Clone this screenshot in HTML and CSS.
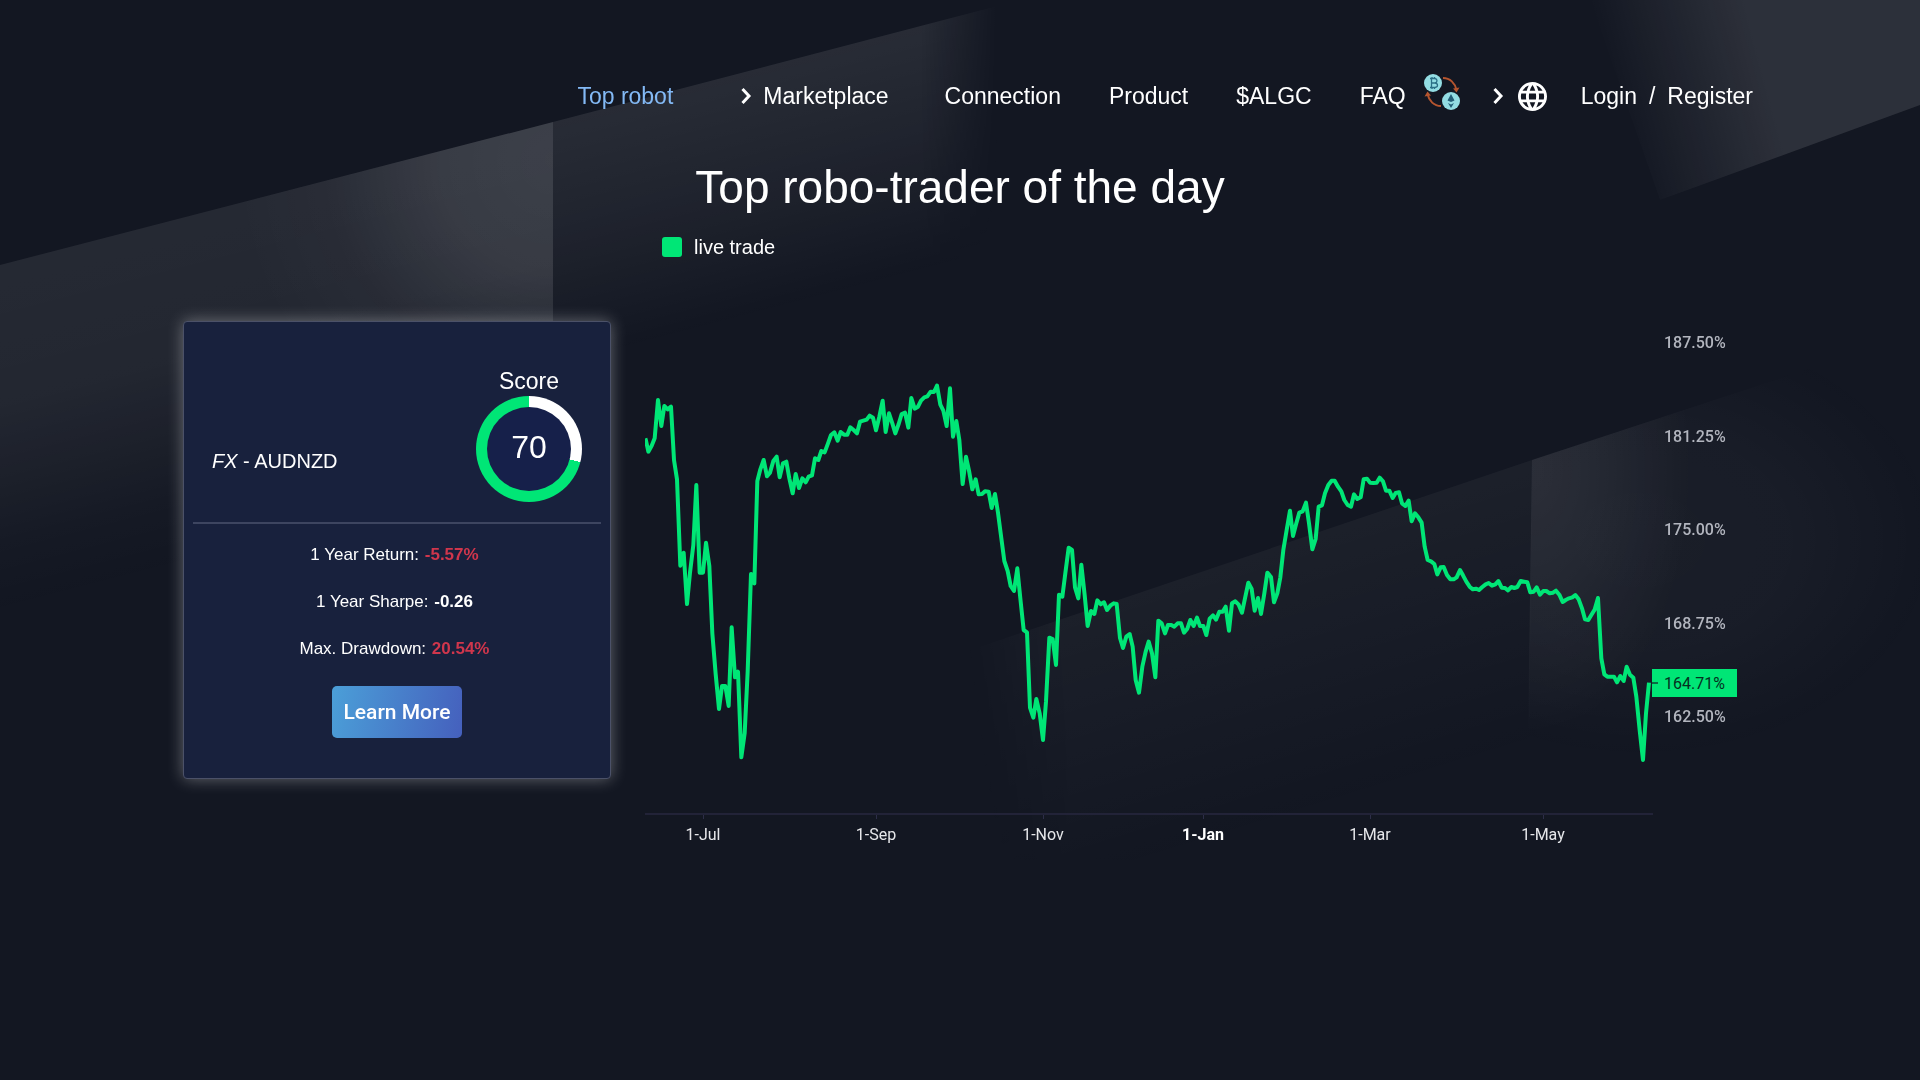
FILE: index.html
```html
<!DOCTYPE html>
<html lang="en">
<head>
    <meta charset="UTF-8">
    <meta name="viewport" content="width=device-width, initial-scale=1.0">
    <title>Top robo-trader of the day</title>
    <link rel="stylesheet" href="styles.css">
</head>
<body>
    <svg class="backdrop" viewBox="0 0 1920 1080" preserveAspectRatio="none" aria-hidden="true">
        <defs>
            <linearGradient id="beamDown" gradientUnits="userSpaceOnUse" x1="230" y1="205" x2="315" y2="535">
                <stop offset="0" stop-color="#fff" stop-opacity="0.08"/>
                <stop offset="0.4" stop-color="#fff" stop-opacity="0.07"/>
                <stop offset="0.8" stop-color="#fff" stop-opacity="0.015"/>
                <stop offset="1" stop-color="#fff" stop-opacity="0"/>
            </linearGradient>
            <radialGradient id="beamGlow" gradientUnits="userSpaceOnUse" cx="553" cy="160" r="320">
                <stop offset="0" stop-color="#fff" stop-opacity="0.11"/>
                <stop offset="0.35" stop-color="#fff" stop-opacity="0.09"/>
                <stop offset="0.7" stop-color="#fff" stop-opacity="0.02"/>
                <stop offset="1" stop-color="#fff" stop-opacity="0"/>
            </radialGradient>
            <linearGradient id="beamRight" gradientUnits="userSpaceOnUse" x1="740" y1="75" x2="800" y2="305">
                <stop offset="0" stop-color="#fff" stop-opacity="0.09"/>
                <stop offset="0.4" stop-color="#fff" stop-opacity="0.06"/>
                <stop offset="1" stop-color="#fff" stop-opacity="0"/>
            </linearGradient>
            <linearGradient id="fadeRight" gradientUnits="userSpaceOnUse" x1="920" y1="50" x2="1000" y2="50">
                <stop offset="0" stop-color="#fff"/>
                <stop offset="1" stop-color="#000"/>
            </linearGradient>
            <mask id="maskRight" maskUnits="userSpaceOnUse" x="0" y="0" width="1920" height="1080">
                <rect width="1920" height="1080" fill="url(#fadeRight)"/>
            </mask>
            <linearGradient id="corner" gradientUnits="userSpaceOnUse" x1="1610" y1="100" x2="1760" y2="60">
                <stop offset="0" stop-color="#fff" stop-opacity="0"/>
                <stop offset="1" stop-color="#fff" stop-opacity="0.11"/>
            </linearGradient>
            <linearGradient id="lower" gradientUnits="userSpaceOnUse" x1="1260" y1="550" x2="1340" y2="810">
                <stop offset="0" stop-color="#fff" stop-opacity="0.04"/>
                <stop offset="1" stop-color="#fff" stop-opacity="0"/>
            </linearGradient>
            <linearGradient id="fadeLeft" gradientUnits="userSpaceOnUse" x1="965" y1="650" x2="1065" y2="640">
                <stop offset="0" stop-color="#000"/>
                <stop offset="1" stop-color="#fff"/>
            </linearGradient>
            <mask id="maskLeft" maskUnits="userSpaceOnUse" x="0" y="0" width="1920" height="1080">
                <rect width="1920" height="1080" fill="url(#fadeLeft)"/>
            </mask>
            <radialGradient id="lowerGlow" gradientUnits="userSpaceOnUse" cx="0" cy="0" r="1" gradientTransform="translate(1532 470) scale(160 265)">
                <stop offset="0" stop-color="#fff" stop-opacity="0.08"/>
                <stop offset="0.5" stop-color="#fff" stop-opacity="0.045"/>
                <stop offset="1" stop-color="#fff" stop-opacity="0"/>
            </radialGradient>
            <radialGradient id="lowerEnd" gradientUnits="userSpaceOnUse" cx="0" cy="0" r="1" gradientTransform="translate(1640 540) scale(300 220)">
                <stop offset="0" stop-color="#fff" stop-opacity="0.032"/>
                <stop offset="0.5" stop-color="#fff" stop-opacity="0.026"/>
                <stop offset="1" stop-color="#fff" stop-opacity="0"/>
            </radialGradient>
        </defs>
        <polygon points="0,265 553,122 553,700 0,700" fill="url(#beamDown)"/>
        <polygon points="0,265 553,122 553,560 0,560" fill="url(#beamGlow)"/>
        <polygon points="553,122 1020,0 1100,0 1100,420 553,420" fill="url(#beamRight)" mask="url(#maskRight)"/>
        <polygon points="1590,0 1920,0 1920,105 1660,200" fill="url(#corner)"/>
        <polygon points="970,650 1532,460 1528,860 970,860" fill="url(#lower)" mask="url(#maskLeft)"/>
        <polygon points="1532,460 1920,332 1920,780 1528,780" fill="url(#lowerEnd)"/>
        <polygon points="1532,460 1760,385 1760,660 1528,733" fill="url(#lowerGlow)"/>
    </svg>

    <header class="header">
        <nav class="nav">
            <a href="#top" class="nav-link active">Top robot</a>
            <a href="#marketplace" class="nav-link has-arrow">
                <svg class="arrow" viewBox="0 0 10 16" aria-hidden="true"><path d="M1.500 1L8 8l-6.500 7"/></svg>
                Marketplace
            </a>
            <a href="#connection" class="nav-link">Connection</a>
            <a href="#product" class="nav-link">Product</a>
            <a href="#algc" class="nav-link">$ALGC</a>
            <a href="#faq" class="nav-link">FAQ</a>
        </nav>
        <a href="#exchange" class="exchange" aria-label="Exchange">
            <svg viewBox="0 0 36 36" aria-hidden="true">
                <g fill="none" stroke="#b5552f" stroke-width="2">
                    <path d="M19 4c7 0 12 5 13.500 12"/>
                    <path d="M17 32C10 32 5 27 3.500 20"/>
                </g>
                <path d="M29 14.500l3.500 4 3-5zM.5 22.500l3-5 3.500 4z" fill="#b5552f"/>
                <circle cx="9" cy="9" r="9" fill="#93dde3"/>
                <circle cx="27" cy="27" r="9" fill="#93dde3"/>
                <path d="M6 4.500h5q2 .5 2 2.300T11 9q2.500.3 2.500 2.300T11 13.500H6M7.500 4.500v9M7.500 9H11M8 3v1.500M10.500 3v1.500M8 13.500V15M10.500 13.500V15" fill="none" stroke="#2b6f86" stroke-width="1.300"/>
                <path d="M27 20l3.500 6.500L27 28l-3.500-1.500zM27 34l-3-5 3 1.500 3-1.500z" fill="#235e77"/>
            </svg>
        </a>
        <button type="button" class="language" aria-label="Language">
            <svg class="arrow" viewBox="0 0 10 16" aria-hidden="true"><path d="M1.500 1L8 8l-6.500 7"/></svg>
            <svg class="globe" viewBox="2 2 20 20" aria-hidden="true"><path d="M11.990 2C6.470 2 2 6.480 2 12s4.470 10 9.990 10C17.520 22 22 17.520 22 12S17.520 2 11.990 2zm6.930 6h-2.950c-.32-1.250-.78-2.450-1.380-3.560 1.840.63 3.370 1.910 4.330 3.560zM12 4.040c.83 1.200 1.480 2.530 1.910 3.960h-3.820c.43-1.430 1.080-2.760 1.910-3.960zM4.260 14C4.100 13.360 4 12.690 4 12s.1-1.360.26-2h3.380c-.08.66-.14 1.320-.14 2 0 .68.06 1.340.14 2H4.260zm.82 2h2.950c.32 1.250.78 2.450 1.380 3.560-1.840-.63-3.370-1.900-4.330-3.560zm2.950-8H5.080c.96-1.660 2.490-2.930 4.330-3.560C8.810 5.550 8.350 6.750 8.030 8zM12 19.960c-.83-1.200-1.480-2.530-1.910-3.960h3.820c-.43 1.430-1.080 2.760-1.910 3.960zM14.340 14H9.660c-.09-.66-.16-1.320-.16-2 0-.68.07-1.350.16-2h4.680c.09.65.16 1.320.16 2 0 .68-.07 1.340-.16 2zm.25 5.560c.6-1.110 1.060-2.310 1.380-3.560h2.950c-.96 1.650-2.490 2.930-4.330 3.560zM16.360 14c.08-.66.14-1.320.14-2 0-.68-.06-1.340-.14-2h3.380c.16.64.26 1.310.26 2s-.1 1.360-.26 2h-3.380z"/></svg>
        </button>
        <div class="account">
            <a href="#login">Login</a>
            <span>/</span>
            <a href="#register">Register</a>
        </div>
    </header>

    <main class="main">
        <h1 class="title">Top robo-trader of the day</h1>
        <div class="content">
            <div class="legend"><span class="legend-color"></span>live trade</div>

            <section class="card">
                <div class="card-top">
                    <p class="robot-name"><em>FX</em> - AUDNZD</p>
                    <div class="score">
                        <span class="score-title">Score</span>
                        <div class="score-ring"><span class="score-value">70</span></div>
                    </div>
                </div>
                <div class="stats">
                    <p>1 Year Return: <b class="negative">-5.57%</b></p>
                    <p>1 Year Sharpe: <b>-0.26</b></p>
                    <p>Max. Drawdown: <b class="negative">20.54%</b></p>
                </div>
                <button type="button" class="learn-more">Learn More</button>
            </section>

            <!-- Performance chart -->
            <svg class="chart" viewBox="645 312 1092 540" role="img" aria-label="Performance">
                <g class="y-labels">
                    <text x="1664" y="348">187.50%</text>
                    <text x="1664" y="442">181.25%</text>
                    <text x="1664" y="535">175.00%</text>
                    <text x="1664" y="629">168.75%</text>
                    <text x="1664" y="722">162.50%</text>
                </g>
                <path class="axis" d="M645 814H1653"/>
                <path class="ticks" d="M703.500 815v4M876.500 815v4M1043.500 815v4M1203.500 815v4M1370.500 815v4M1543.500 815v4"/>
                <g class="x-labels">
                    <text x="703" y="840">1-Jul</text>
                    <text x="876" y="840">1-Sep</text>
                    <text x="1043" y="840">1-Nov</text>
                    <text x="1203" y="840" class="year">1-Jan</text>
                    <text x="1370" y="840">1-Mar</text>
                    <text x="1543" y="840">1-May</text>
                </g>
                <polyline class="line" transform="translate(640 370) scale(0.33333)" points="
                    16,205 18,212 25,245 35,227 44,205 54,90 64,168 73,108 83,118 93,110 102,270 111,328 121,587 131,548 141,702
                    150,608 160,525 169,345 179,608 189,608 198,518 208,588 217,790 227,912 237,1017 246,948 256,948 266,1008
                    275,772 285,922 294,905 304,1162 314,1090 323,905 333,612 343,640 352,333 361,298 371,270 381,319 390,308
                    400,273 410,260 419,322 429,280 439,275 448,325 458,370 467,312 477,354 487,325 497,337 506,320 516,316
                    525,265 535,270 544,243 554,247 564,220 573,195 583,187 593,212 602,186 612,194 622,194 631,172 641,180
                    651,190 660,155 670,152 680,149 689,137 699,143 708,181 718,140 728,92 737,186 747,130 757,160 766,190
                    776,162 785,132 795,128 805,173 814,84 824,116 834,110 843,92 853,82 862,79 872,65 882,66 891,47 901,104
                    910,122 920,168 930,55 939,200 949,153 958,210 968,342 978,260 987,302 997,358 1007,328 1016,373
                    1026,372 1035,364 1046,365 1055,414 1065,372 1074,428 1084,505 1093,573 1103,603 1112,648 1122,663
                    1132,595 1141,685 1151,780 1161,787 1170,1013 1180,1043 1189,987 1199,1030 1209,1110 1218,995 1228,803
                    1238,807 1248,885 1257,674 1267,680 1276,610 1286,533 1296,540 1305,652 1315,685 1324,584 1334,675
                    1343,768 1353,723 1363,732 1372,691 1382,703 1392,697 1401,720 1411,707 1421,700 1430,702 1440,804
                    1449,834 1459,800 1469,792 1478,830 1487,930 1497,968 1507,890 1517,845 1526,815 1536,850 1546,922
                    1555,752 1565,760 1575,790 1584,765 1594,765 1603,770 1613,760 1623,760 1632,788 1642,776 1651,750
                    1661,768 1671,743 1680,768 1690,768 1699,795 1709,746 1719,736 1728,749 1738,725 1748,725 1757,710
                    1767,782 1776,700 1786,694 1796,704 1806,728 1815,685 1825,638 1835,657 1844,722 1854,684 1863,732
                    1873,670 1882,608 1893,621 1902,697 1912,670 1921,622 1930,540 1940,480 1950,422 1959,498 1969,460
                    1978,428 1988,424 1998,398 2007,460 2017,538 2027,507 2036,410 2046,406 2055,370 2065,345 2075,332
                    2084,332 2094,350 2104,364 2113,390 2123,405 2133,410 2142,373 2152,387 2162,382 2171,328 2181,326
                    2190,338 2200,339 2210,338 2219,323 2229,334 2238,362 2248,362 2258,384 2267,369 2277,367 2286,400
                    2296,408 2306,392 2315,454 2325,430 2335,442 2345,458 2354,530 2363,570 2373,574 2383,582 2392,613
                    2402,592 2411,591 2421,615 2431,628 2441,628 2450,622 2460,600 2469,616 2479,635 2489,650 2498,658
                    2508,656 2517,660 2527,651 2537,643 2546,639 2556,647 2566,643 2575,633 2585,653 2595,654 2604,661
                    2614,651 2623,654 2632,651 2642,633 2652,635 2662,637 2671,667 2681,665 2690,652 2700,674 2710,663
                    2719,663 2729,670 2739,668 2748,662 2758,674 2768,696 2777,690 2787,685 2797,682 2806,675 2816,688
                    2826,715 2835,748 2845,750 2854,735 2864,719 2874,684 2884,865 2893,913 2902,920 2912,920 2922,920
                    2931,937 2941,918 2951,933 2960,890 2970,914 2980,923 2989,980 2999,1080 3009,1170 3018,1030 3027,938"/>
                <rect class="tag" x="1652" y="669" width="85" height="28"/>
                <path class="tag-tick" d="M1652 683h6"/>
                <text class="tag-text" x="1664" y="689">164.71%</text>
            </svg>
        </div>
    </main>
</body>
</html>
```
FILE: styles.css
```css
* {
    box-sizing: border-box;
}

body {
    margin: 0;
    min-height: 100vh;
    background-color: #131722;
    color: #fff;
    font-family: "Liberation Sans", Arial, sans-serif;
}

a {
    color: inherit;
    text-decoration: none;
}

p {
    margin: 0;
}

.backdrop {
    position: fixed;
    top: 0;
    left: 0;
    width: 100%;
    height: 100%;
    z-index: -1;
}

/* Header */
.header {
    display: flex;
    justify-content: flex-end;
    align-items: center;
    height: 160px;
    padding: 32px 167px 0;
    font-size: 23px;
}

.nav {
    display: flex;
    gap: 48px;
}

.nav-link.active {
    color: #83b9f5;
    margin-right: 20px;
}

.has-arrow {
    display: flex;
    align-items: center;
    gap: 12px;
    margin-right: 8px;
}

.arrow {
    width: 10px;
    height: 16px;
    fill: none;
    stroke: #fff;
    stroke-width: 3;
    overflow: visible;
}

.exchange {
    margin: 0 33px 8px 18px;
}

.exchange svg {
    display: block;
    width: 36px;
    height: 36px;
}

.language {
    display: flex;
    align-items: center;
    gap: 15px;
    padding: 0;
    border: none;
    background: none;
    cursor: pointer;
}

.globe {
    width: 29px;
    height: 29px;
    fill: #fff;
}

.account {
    display: flex;
    gap: 12px;
    margin-left: 34px;
}

/* Main content */
.main {
    padding: 0 183px;
}

.title {
    margin: 0;
    font-size: 46px;
    font-weight: normal;
    line-height: 54px;
    text-align: center;
}

.content {
    display: grid;
    grid-template-columns: 428px 1fr;
    column-gap: 34px;
    align-items: start;
}

.legend {
    grid-column: 2;
    display: flex;
    align-items: center;
    gap: 12px;
    height: 66px;
    margin-bottom: 32px;
    padding-left: 17px;
    font-size: 20px;
}

.legend-color {
    width: 20px;
    height: 20px;
    border-radius: 3px;
    background-color: #00e676;
}

/* Robot card */
.card {
    display: flex;
    flex-direction: column;
    align-items: center;
    margin-top: 9px;
    padding: 0 9px 40px;
    border: 1px solid #4b5168;
    border-radius: 4px;
    background-color: #18213d;
    box-shadow: 0 0 16px rgba(255, 255, 255, 0.35);
}

.card-top {
    display: flex;
    justify-content: space-between;
    align-self: stretch;
    height: 202px;
    padding: 44px 19px 0;
    border-bottom: 2px solid #3d4560;
}

.robot-name {
    padding-top: 84px;
    font-size: 20px;
}

.score {
    display: flex;
    flex-direction: column;
    align-items: center;
    font-size: 23px;
}

.score-title {
    line-height: 30px;
}

.score-ring {
    display: flex;
    align-items: center;
    justify-content: center;
    width: 106px;
    height: 106px;
    border-radius: 50%;
    background: conic-gradient(#fff 29%, #00e676 29%);
}

.score-value {
    width: 84px;
    height: 84px;
    border-radius: 50%;
    background-color: #16204a;
    font-size: 32px;
    line-height: 80px;
    text-align: center;
}

.stats {
    padding: 7px 5px 0 0;
    font-size: 17px;
    line-height: 47px;
    text-align: center;
}

.stats b {
    margin-left: 1px;
}

.negative {
    color: #d0364c;
}

.learn-more {
    width: 130px;
    height: 52px;
    margin-top: 14px;
    padding: 0;
    border: none;
    border-radius: 5px;
    background: linear-gradient(100deg, #4b9fd8, #4560bd);
    color: #fff;
    font-family: Roboto, sans-serif;
    font-size: 21px;
    font-weight: 500;
    cursor: pointer;
}

/* Chart */
.chart {
    width: 100%;
    font-family: Roboto, sans-serif;
    font-size: 16px;
}

.line {
    fill: none;
    stroke: #00e676;
    stroke-width: 12;
    stroke-linejoin: round;
}

.axis {
    stroke: #222338;
    stroke-width: 2;
}

.ticks {
    stroke: #2d2e48;
}

.y-labels {
    fill: #b2b5be;
    font-weight: 500;
}

.x-labels {
    fill: #e6e7ea;
    text-anchor: middle;
}

.year {
    fill: #fff;
    font-weight: bold;
}

.tag {
    fill: #00e676;
}

.tag-tick {
    stroke: #0a6b42;
    stroke-width: 2;
}

.tag-text {
    fill: #06301f;
}
```
